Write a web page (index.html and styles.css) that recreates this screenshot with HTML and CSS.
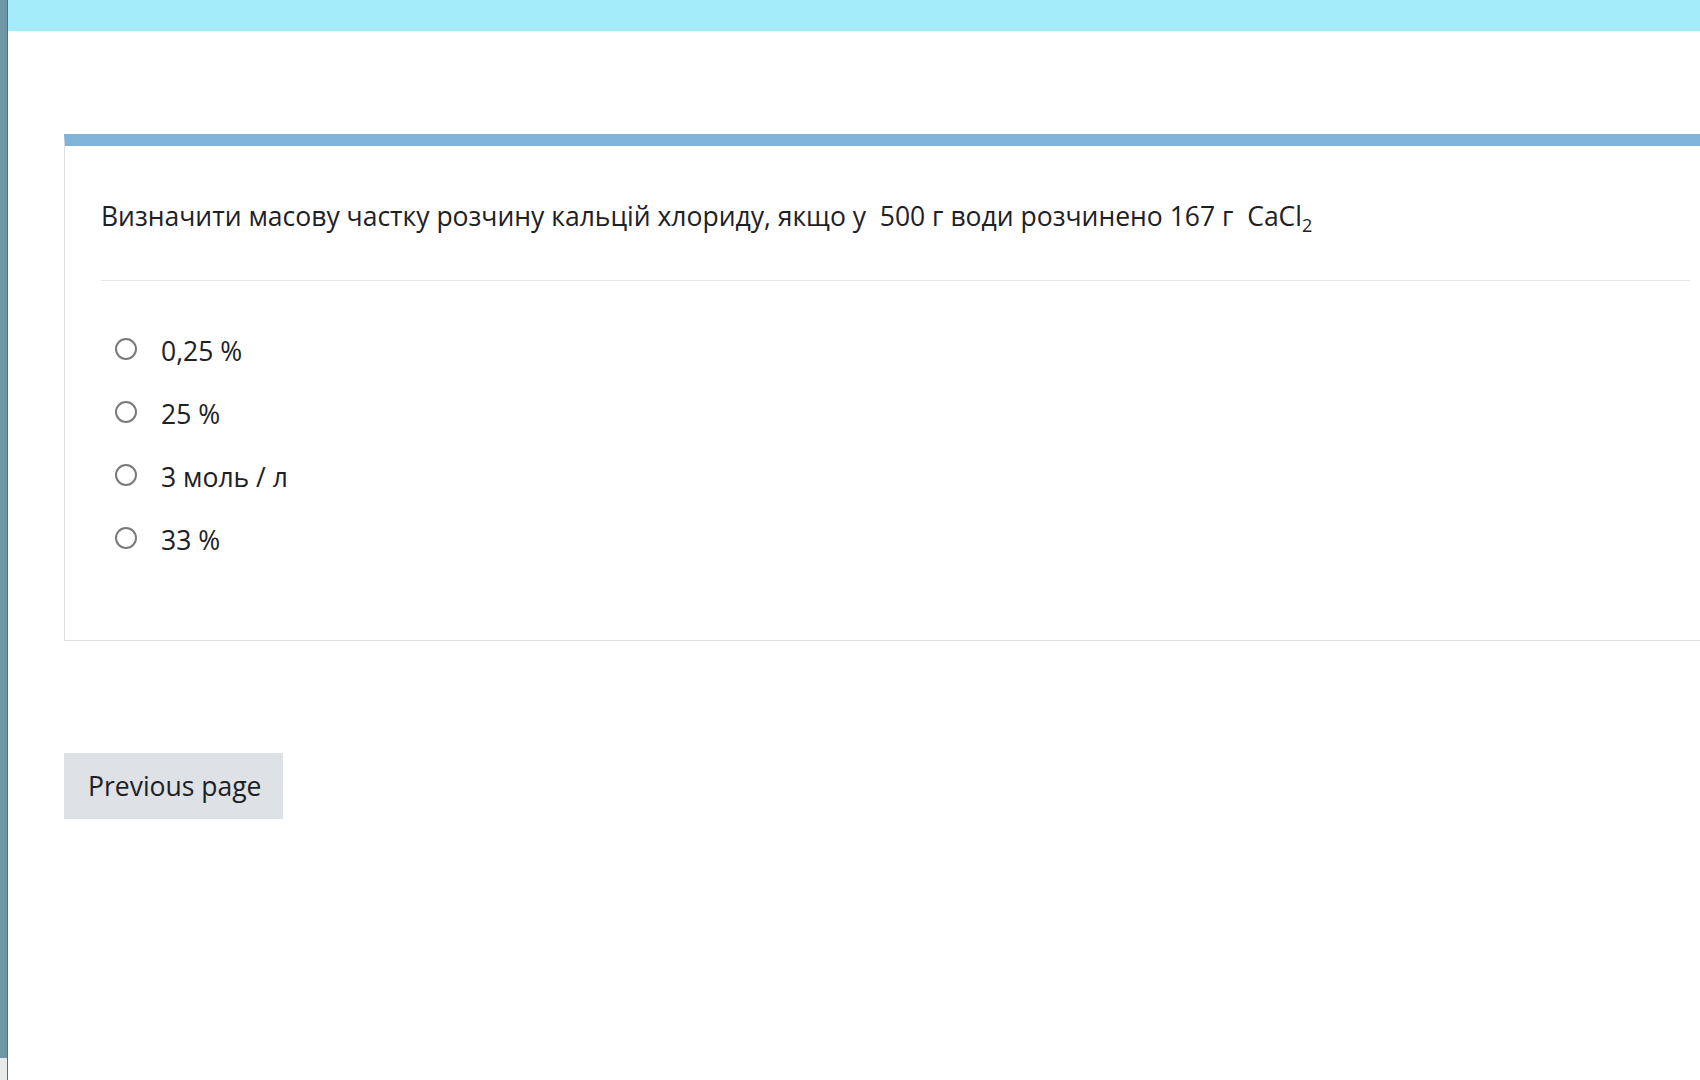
FILE: index.html
```html
<!DOCTYPE html>
<html lang="uk">
<head>
    <meta charset="UTF-8">
    <meta name="viewport" content="width=device-width, initial-scale=1.0">
    <title>Тест</title>
    <link rel="stylesheet" href="styles.css">
</head>
<body>

<div class="page">
    <div class="side-edge"></div>

    <div class="main">
        <div class="top-bar"></div>

        <div class="content">
            <form class="question" id="q1">
                <div class="qtext">Визначити масову частку розчину кальцій хлориду, якщо у &nbsp;500 г води розчинено 167 г &nbsp;CaCl<sub>2</sub></div>

                <div class="answers">
                    <label class="answer">
                        <input type="radio" name="q1answer" value="0">
                        <span>0,25 %</span>
                    </label>
                    <label class="answer">
                        <input type="radio" name="q1answer" value="1">
                        <span>25 %</span>
                    </label>
                    <label class="answer">
                        <input type="radio" name="q1answer" value="2">
                        <span>3 моль / л</span>
                    </label>
                    <label class="answer">
                        <input type="radio" name="q1answer" value="3">
                        <span>33 %</span>
                    </label>
                </div>
            </form>

            <div class="nav">
                <button type="button" class="btn-prev">Previous page</button>
            </div>
        </div>
    </div>
</div>

</body>
</html>
```

FILE: styles.css
```css
body {
    font-family: 'Open Sans', 'Noto Sans', sans-serif;
    margin: 0;
    padding: 0;
    background-color: #fff;
    color: #1d2125;
    overflow: hidden;
}

.page {
    display: flex;
    height: 100vh;
}

/* thin window edge on the left */
.side-edge {
    width: 7px;
    flex-shrink: 0;
    background: linear-gradient(to bottom, #6f97a5 0, #6f97a5 1058px, #e8eaeb 1058px);
    border-right: 1px solid #4f6f7a;
}

.main {
    flex: 1;
    display: flex;
    flex-direction: column;
    overflow: hidden;
}

.top-bar {
    height: 31px;
    flex-shrink: 0;
    background-color: #a4ecfa;
}

.content {
    padding: 103px 0 0 56px;
}

.question {
    margin-right: -60px;
    border: 1px solid #e0e0e0;
    border-top: 12px solid #7fb3d9;
    padding: 51px 69px 81px 36px;
}

.qtext {
    font-size: 26.5px;
    line-height: 38px;
    padding-bottom: 45px;
    border-bottom: 1px solid #e6e6e6;
}

.qtext sub {
    font-size: 18px;
    line-height: 0;
}

.answers {
    padding-top: 51px;
    display: flex;
    flex-direction: column;
    gap: 25px;
}

.answer {
    display: flex;
    align-items: center;
    gap: 24px;
    padding-left: 14px;
    font-size: 26.5px;
    line-height: 38px;
}

.answer input[type="radio"] {
    appearance: none;
    width: 22px;
    height: 22px;
    margin: -4px 0 0 0;
    border: 2px solid #7a7a7a;
    border-radius: 50%;
    background: #fff;
}

.answer input[type="radio"]:checked {
    background: radial-gradient(circle, #333 0 5px, #fff 6px);
}

.nav {
    padding-top: 112px;
}

.btn-prev {
    font-family: inherit;
    font-size: 26.5px;
    color: #1d2125;
    background-color: #dee2e6;
    border: none;
    border-radius: 0;
    height: 66px;
    padding: 0 21px 0 24px;
    cursor: pointer;
}

.btn-prev:hover {
    background-color: #c8cdd2;
}
```
